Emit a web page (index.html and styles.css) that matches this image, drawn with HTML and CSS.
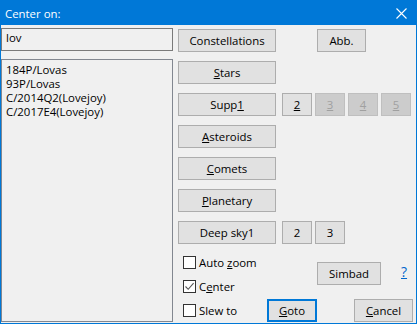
FILE: index.html
```html
<!DOCTYPE html>
<html lang="en">
<head>
  <meta charset="UTF-8">
  <title>Center on:</title>
  <link rel="stylesheet" href="styles.css">
</head>
<body>
  <div class="window">
    <div class="titlebar">
      <span class="title">Center on:</span>
      <svg class="close" width="11" height="11" viewBox="0 0 11 11">
        <path d="M0.5 0.5 L10.5 10.5 M10.5 0.5 L0.5 10.5" stroke="#fff" stroke-width="1.1" fill="none"/>
      </svg>
    </div>

    <div class="content">
      <div class="left">
        <div class="edit">lov</div>
        <div class="list">
          <div class="item">184P/Lovas</div>
          <div class="item">93P/Lovas</div>
          <div class="item">C/2014Q2(Lovejoy)</div>
          <div class="item">C/2017E4(Lovejoy)</div>
        </div>
      </div>

      <div class="right">
        <div class="row">
          <button class="btn main">Constellations</button>
          <button class="btn abb">Abb.</button>
        </div>
        <div class="row">
          <button class="btn main"><span><u>S</u>tars</span></button>
        </div>
        <div class="row">
          <button class="btn main"><span>Supp<u>1</u></span></button>
          <button class="btn small"><u>2</u></button>
          <button class="btn small" disabled><u>3</u></button>
          <button class="btn small" disabled><u>4</u></button>
          <button class="btn small" disabled><u>5</u></button>
        </div>
        <div class="row">
          <button class="btn main"><span><u>A</u>steroids</span></button>
        </div>
        <div class="row">
          <button class="btn main"><span><u>C</u>omets</span></button>
        </div>
        <div class="row">
          <button class="btn main"><span><u>P</u>lanetary</span></button>
        </div>
        <div class="row">
          <button class="btn main">Deep sky1</button>
          <button class="btn small">2</button>
          <button class="btn small">3</button>
        </div>

        <div class="options">
          <div class="opt-top">
            <div class="checks">
              <label class="check"><span class="box"></span><span>Auto <u>z</u>oom</span></label>
              <label class="check">
                <span class="box">
                  <svg width="11" height="11" viewBox="0 0 11 11">
                    <path d="M1.5 5.5 L4.2 8.3 L9.6 2.2" stroke="#555" stroke-width="1.1" fill="none"/>
                  </svg>
                </span><span>C<u>e</u>nter</span>
              </label>
            </div>
            <button class="btn simbad">Simbad</button>
            <a class="help">?</a>
          </div>
          <div class="opt-bottom">
            <label class="check slew"><span class="box"></span><span>Slew to</span></label>
            <button class="btn goto"><span><u>G</u>oto</span></button>
            <button class="btn cancel"><span><u>C</u>ancel</span></button>
          </div>
        </div>
      </div>
    </div>
  </div>
</body>
</html>
```

FILE: styles.css
```css
body {
  margin: 0;
  background: #fff;
  font-family: "Open Sans", "Noto Sans", sans-serif;
  font-size: 11.4px;
  color: #000;
}
.window {
  width: 415px;
  height: 322px;
  border: 1px solid #0078d7;
  background: #f0f0f0;
}
.titlebar {
  height: 24px;
  background: #0078d7;
  color: #fff;
  display: flex;
  align-items: center;
  justify-content: space-between;
  padding-left: 4px;
}
.close {
  margin-right: 9px;
  margin-top: 1px;
}
.content {
  display: flex;
}
.left {
  width: 172px;
  padding-top: 3px;
  display: flex;
  flex-direction: column;
}
.edit {
  height: 23px;
  box-sizing: border-box;
  border: 1px solid #7a7a7a;
  padding-left: 4px;
  padding-top: 1px;
  line-height: 15px;
}
.list {
  margin-top: 8px;
  height: 263px;
  box-sizing: border-box;
  border: 1px solid #828790;
  padding: 3px 4px;
}
.item {
  line-height: 14px;
}
.right {
  margin-left: 5px;
  padding-top: 4px;
  display: flex;
  flex-direction: column;
  gap: 9px;
}
.row {
  display: flex;
  height: 23px;
}
.btn {
  font: inherit;
  color: #000;
  background: #e1e1e1;
  border: 1px solid #adadad;
  padding: 0;
  margin: 0;
  height: 23px;
  box-sizing: border-box;
  display: flex;
  align-items: center;
  justify-content: center;
}
.btn:disabled {
  background: #cccccc;
  border-color: #bfbfbf;
  color: #a0a0a0;
}
.main {
  width: 98px;
}
.abb {
  width: 49px;
  margin-left: 41px;
}
.small {
  width: 30px;
  margin-left: 3px;
}
.main + .small {
  margin-left: 6px;
}
.options {
  margin-top: -3px;
}
.opt-top {
  display: flex;
  align-items: flex-start;
}
.checks {
  margin-left: 5px;
  width: 134px;
}
.check {
  display: flex;
  align-items: center;
  height: 24px;
}
.box {
  width: 13px;
  height: 13px;
  box-sizing: border-box;
  border: 1px solid #333;
  background: #fff;
  margin-right: 3px;
  display: flex;
  align-items: center;
  justify-content: center;
}
.simbad {
  width: 64px;
  margin-top: 12px;
}
.help {
  margin-left: 20px;
  margin-top: 12px;
  font-size: 14px;
  color: #0066cc;
  text-decoration: underline;
}
.opt-bottom {
  display: flex;
  align-items: flex-end;
  height: 24px;
}
.slew {
  margin-left: 5px;
  width: 84px;
}
.goto {
  width: 50px;
  border: 2px solid #0078d7;
}
.cancel {
  width: 59px;
  margin-left: 37px;
}
```
